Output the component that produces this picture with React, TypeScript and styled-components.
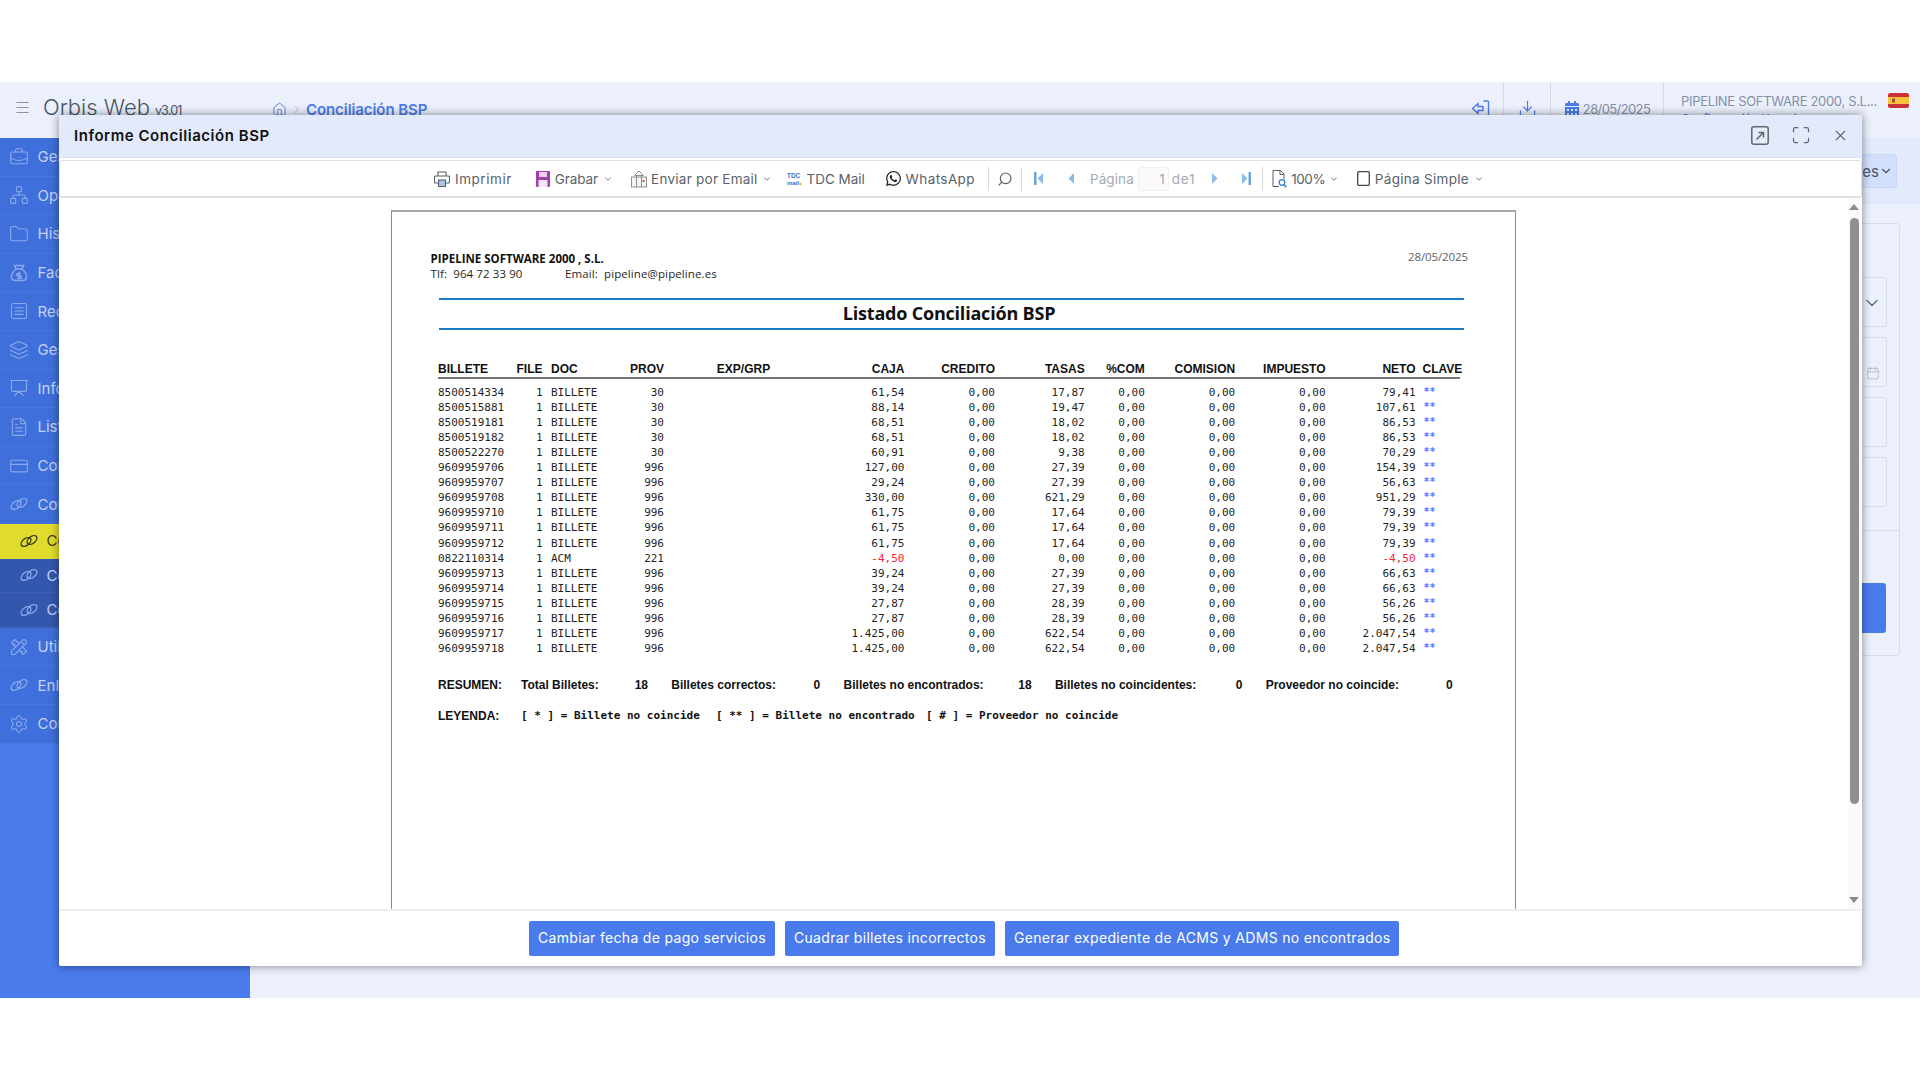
import React from 'react';
import styled, { createGlobalStyle } from 'styled-components';
import { BriefcaseBusiness, Network, Folder, SquareMenu, Layers, Presentation, FileText, CreditCard, Settings, Home, ChevronRight, ChevronDown, Search, Download, Calendar, Menu, X, Maximize } from 'lucide-react';
import { FaWhatsapp, FaCalendarAlt } from 'react-icons/fa';
import { TbTools } from 'react-icons/tb';

const UI = '"Inter", "Noto Sans", sans-serif';
const MONO = '"DejaVu Sans Mono", "Liberation Mono", monospace';
const ARIAL = '"Liberation Sans", Arial, sans-serif';
const DOC = '"Open Sans", "Noto Sans", sans-serif';

const Global = createGlobalStyle`
  html, body { margin: 0; padding: 0; background: #fff; }
  body { width: 1920px; height: 1080px; overflow: hidden; font-family: ${UI}; }
  * { box-sizing: border-box; }
`;

const Shell = styled.div`
  position: relative;
  margin-top: 82px;
  height: 916px;
  background: #ebf0fc;
  display: flex;
  flex-direction: column;
`;
const TopBar = styled.header`
  height: 56px;
  display: flex;
  align-items: flex-start;
  padding: 0 11px 0 14px;
  color: #6d7a90;
`;
const Burger = styled.span`
  display: flex;
  margin-top: 17px;
  color: #8a93a3;
`;
const Brand = styled.div`
  margin: 12px 0 0 12px;
  font-size: 22px;
  font-weight: 300;
  color: #4a5568;
  letter-spacing: 0;
  white-space: nowrap;
  width: 229px;
  small { font-size: 12.5px; margin-left: 5px; font-weight: 400; letter-spacing: -0.8px; }
`;
const Crumbs = styled.div`
  display: flex;
  align-items: center;
  gap: 3px;
  margin-top: 18px;
  color: #4a7bed;
  font-size: 15px;
  font-weight: 600;
  letter-spacing: -0.08px;
  white-space: nowrap;
  flex: 1;
  svg:nth-child(2) { color: #aab4c8; margin-right: 0; }
`;
const HeadTool = styled.div<{ $w: number }>`
  width: ${p => p.$w}px;
  height: 38px;
  padding-top: 17px;
  display: flex;
  justify-content: center;
  border-right: 1px solid #d4dbe8;
  gap: 3px;
  font-size: 13px;
  color: #4a7bed;
  span { color: #8490a5; letter-spacing: -0.6px; line-height: 20px; }
`;
const Company = styled.div`
  margin: 11px 0 0 17px;
  width: 207px;
  font-size: 13px;
  line-height: 17px;
  color: #8490a5;
  white-space: nowrap;
  letter-spacing: -0.32px;
  b { display: block; color: #4a7bed; font-weight: 500; font-size: 12px; }
`;
const Flag = styled.svg`
  margin-top: 11px;
  flex: none;
`;
const Below = styled.div`
  flex: 1;
  display: flex;
  min-height: 0;
`;
const Sidebar = styled.nav`
  width: 250px;
  flex: none;
  background: #4a7bed;
  display: flex;
  flex-direction: column;
`;
const NavRow = styled.div<{ $kind?: 'active' | 'sub' }>`
  display: flex;
  align-items: center;
  gap: ${p => (p.$kind ? '7.5px' : '9px')};
  height: ${p => (p.$kind ? '34.6px' : '38.6px')};
  padding-left: ${p => (p.$kind ? '19px' : '8.5px')};
  background: ${p => (p.$kind === 'active' ? '#e0dc2e' : p.$kind === 'sub' ? '#3357ad' : '#3f6fdb')};
  color: ${p => (p.$kind === 'active' ? '#3f3f20' : '#c3d1f6')};
  border-bottom: 1px solid rgba(255, 255, 255, 0.05);
  font-size: 15px;
  white-space: nowrap;
  svg { color: ${p => (p.$kind === 'active' ? '#3a3a1a' : '#8ba8ec')}; flex: none; }
`;
const Main = styled.main`
  flex: 1;
  display: flex;
  flex-direction: column;
`;
const FilterBar = styled.div`
  height: 66px;
  background: #e3eafb;
  border-bottom: 1px solid #dbe4f8;
  display: flex;
  justify-content: flex-end;
  padding: 16px 23px 0 0;
`;
const OptionsButton = styled.div`
  height: 34px;
  display: flex;
  align-items: center;
  gap: 0;
  padding: 0 3px 0 12px;
  background: #d3e0fb;
  border: 1px solid #c6d6f8;
  border-radius: 3px;
  color: #4b5568;
  font-size: 15px;
`;
const FormPanel = styled.section`
  width: 400px;
  height: 433px;
  margin: 19px 20px 0 auto;
  border: 1px solid #d6dcea;
  border-radius: 3px;
  padding: 53px 12px 0;
  display: flex;
  flex-direction: column;
  gap: 10px;
`;
const Field = styled.div`
  height: 50px;
  flex: none;
  border: 1px solid #d6dcea;
  border-radius: 3px;
  display: flex;
  align-items: center;
  justify-content: flex-end;
  padding: 2px 4px 0 0;
  color: #5b6b85;
`;
const PanelFoot = styled.div`
  margin: 13px -12px 0;
  border-top: 1px solid #d6dcea;
  padding: 52px 13px 0;
`;
const PanelButton = styled.div`
  height: 50px;
  background: #4a7bed;
  border-radius: 3px;
`;

const Modal = styled.div`
  position: absolute;
  left: 59px;
  top: 33px;
  width: 1803px;
  height: 851px;
  background: #fff;
  box-shadow: 0 0 10px rgba(0, 0, 0, 0.45);
  border-radius: 2px;
  display: flex;
  flex-direction: column;
`;
const ModalHead = styled.div`
  height: 43px;
  flex: none;
  background: #e3eafb;
  border-bottom: 1px solid #d6e0f8;
  display: flex;
  align-items: center;
  padding: 0 13px 2px 15px;
  color: #666;
`;
const ModalTitle = styled.h1`
  margin: 0;
  flex: 1;
  font-size: 15px;
  font-weight: 600;
  color: #111;
  letter-spacing: 0.54px;
`;
const HeadIcons = styled.div`
  display: flex;
  align-items: center;
  gap: 22px;
  svg:last-child { margin-left: -1px; }
`;
const Toolbar = styled.div`
  height: 38px;
  flex: none;
  margin-top: 2px;
  border: 1px solid #e0e0e0;
  border-bottom-width: 2px;
  border-radius: 3px;
  display: flex;
  align-items: center;
  padding-left: 374px;
  font-size: 13.5px;
  color: #5a5f69;
  svg.chev { stroke-width: 2; color: #5a5f69; }
`;
const ToolItem = styled.div<{ $ml?: number; $muted?: boolean; $ls?: number; $gap?: number }>`
  display: flex;
  align-items: center;
  gap: ${p => p.$gap ?? 4}px;
  margin-left: ${p => p.$ml ?? 0}px;
  white-space: nowrap;
  color: ${p => (p.$muted ? '#a4a9b2' : 'inherit')};
  letter-spacing: ${p => p.$ls ?? 0.1}px;
`;
const ToolSep = styled.span<{ $ml: number }>`
  width: 1px;
  height: 24px;
  background: #d9d9d9;
  margin-left: ${p => p.$ml}px;
`;
const PageBox = styled.span`
  width: 31px;
  height: 24px;
  margin-left: 4px;
  background: #fafafa;
  border: 1px solid #f0f0f0;
  border-radius: 3px;
  display: flex;
  align-items: center;
  justify-content: flex-end;
  padding-right: 3px;
  color: #a4a9b2;
`;
const ModalBody = styled.div`
  position: relative;
  flex: 1;
  min-height: 0;
  overflow: hidden;
  padding: 12px 0 0 332px;
`;
const Scrollbar = styled.div`
  position: absolute;
  right: 2px;
  top: 0;
  bottom: 0;
  width: 12px;
  background: #fafafa;
  display: flex;
  flex-direction: column;
  align-items: center;
`;
const ArrowUp = styled.span`
  margin-top: 6px;
  width: 0;
  height: 0;
  border: 5px solid transparent;
  border-top: 0;
  border-bottom: 6px solid #8c8c8c;
`;
const Thumb = styled.span`
  margin-top: 8px;
  width: 9px;
  height: 586px;
  background: #8f8f8f;
  border-radius: 5px;
`;
const ArrowDown = styled.span`
  margin-top: auto;
  margin-bottom: 6px;
  width: 0;
  height: 0;
  border: 5px solid transparent;
  border-bottom: 0;
  border-top: 6px solid #8c8c8c;
`;
const Sheet = styled.article`
  width: 1125px;
  height: 760px;
  border: 1px solid #8a8a8a;
  border-top: 2px solid #a8a8a8;
  border-bottom: 0;
  background: #fff;
  padding-top: 39px;
  color: #1f1f1f;
`;
const SheetTop = styled.div`
  display: flex;
  justify-content: space-between;
  padding: 0 47px 0 38.5px;
  font-family: ${DOC};
  font-size: 11.5px;
  line-height: 15px;
  height: 30px;
  white-space: pre;
`;
const Firm = styled.div`
  font-weight: 700;
  color: #111;
`;
const Contact = styled.div`
  display: flex;
  letter-spacing: 0.1px;
  margin-top: -0.5px;
  span:first-child { width: 134.5px; }
`;
const DocDate = styled.div`
  color: #5f5f5f;
  letter-spacing: -0.1px;
  margin-top: -2px;
`;
const TitleBox = styled.div`
  margin: 17px 0 0 47px;
  width: 1025px;
  height: 32px;
  border-top: 2px solid #1b7cc4;
  border-bottom: 2px solid #1b7cc4;
  padding: 0 5px 2px 0;
  display: flex;
  align-items: center;
  justify-content: center;
  font-family: ${DOC};
  font-size: 18px;
  font-weight: 700;
  color: #111;
  letter-spacing: -0.2px;
`;
const cols = '67px 37.5px 78.5px 43px 52.8px 83.6px 104px 90.6px 89.7px 60.2px 90.3px 90.4px 90px 47px';
const TableHead = styled.div`
  display: grid;
  grid-template-columns: ${cols};
  margin: 31px 0 0 46px;
  width: 1022px;
  height: 18px;
  border-bottom: 2px solid #777;
  font-family: ${ARIAL};
  font-weight: 700;
  font-size: 12px;
  line-height: 16px;
  color: #111;
  white-space: nowrap;
`;
const DataRows = styled.div`
  margin: 5.5px 0 0 46px;
`;
const DataRow = styled.div`
  display: grid;
  grid-template-columns: ${cols};
  height: 15.12px;
  line-height: 15px;
  font-family: ${MONO};
  font-size: 11px;
  white-space: pre;
`;
const Cell = styled.span<{ $right?: boolean; $inset?: number; $red?: boolean }>`
  text-align: ${p => (p.$right ? 'right' : 'left')};
  padding-left: ${p => p.$inset ?? 0}px;
  color: ${p => (p.$red ? '#f5233a' : 'inherit')};
`;
const Key = styled.span`
  padding: 1px 0 0 8px;
  color: #4d7cfe;
  font-size: 10px;
  line-height: 12px;
  font-weight: 700;
`;
const SummaryRow = styled.div`
  display: grid;
  grid-template-columns: 59.7px 127px 149px 188px 187.5px 187px;
  column-gap: 23.3px;
  margin: 20.5px 0 0 46px;
  font-family: ${ARIAL};
  font-weight: 700;
  font-size: 12px;
  line-height: 16px;
  color: #111;
  white-space: nowrap;
`;
const Pair = styled.span`
  display: flex;
  justify-content: space-between;
`;
const LegendRow = styled.div`
  display: grid;
  grid-template-columns: 83px 195px 210px auto;
  margin: 15px 0 0 46px;
  line-height: 16px;
  font-family: ${MONO};
  font-size: 11px;
  font-weight: 700;
  color: #111;
  white-space: pre;
  b { font-family: ${ARIAL}; font-size: 12px; }
`;
const ModalFoot = styled.div`
  height: 57px;
  flex: none;
  border-top: 2px solid #eee;
  padding: 10px 0 0 470px;
  display: flex;
  gap: 10px;
`;
const ActionButton = styled.button`
  height: 35px;
  padding: 0 9px 2px;
  border: 0;
  border-radius: 2px;
  background: #4a7bed;
  color: #fff;
  font-family: ${UI};
  font-size: 14px;
  font-weight: 400;
  letter-spacing: 0.32px;
  white-space: nowrap;
`;

const LinkIcon = ({ size = 20 }: { size?: number }) => (
  <svg width={size} height={size} viewBox="0 0 20 20" fill="none" stroke="currentColor" strokeWidth="1.4">
    <ellipse cx="7" cy="11" rx="5.6" ry="3.4" transform="rotate(-38 7 11)" />
    <ellipse cx="13" cy="9" rx="5.6" ry="3.4" transform="rotate(-38 13 9)" />
  </svg>
);
const BagIcon = () => (
  <svg width="20" height="20" viewBox="0 0 20 20" fill="none" stroke="currentColor" strokeWidth="1.4">
    <path d="M7 6 5.5 2.5h9L13 6M7 6h6M7 6C3 9 2.5 12 2.5 14c0 2.5 2 3.5 4 3.5h7c2 0 4-1 4-3.5 0-2-.5-5-4.500-8" />
    <path d="M10 9v6M12 10.500H9a1.200 1.200 0 0 0 0 2.500h2a1.200 1.200 0 0 1 0 2.500H8" />
  </svg>
);
const LoginArrow = () => (
  <svg width="19" height="19" viewBox="0 0 19 19" fill="none" stroke="currentColor" strokeWidth="1.4">
    <path d="M1.500 9.500 7 4.500v3h5v4H7v3z" />
    <path d="M12.500 2h4a1 1 0 0 1 1 1v13a1 1 0 0 1-1 1h-4" />
  </svg>
);
const OpenExternal = () => (
  <svg width="18" height="19" viewBox="0 0 18 19" fill="none" stroke="currentColor" strokeWidth="1.5">
    <rect x=".8" y=".8" width="16.400" height="17.400" rx="2" />
    <path d="M5.500 13.500 12 7M7.500 6.500H12.500V11.500" />
  </svg>
);
const PrinterIcon = () => (
  <svg width="16" height="16" viewBox="0 0 16 16" fill="none" stroke="#5a5f69" strokeWidth="1.1">
    <path d="M4 5V1h8v4" />
    <path d="M4 12H1.500a1 1 0 0 1-1-1V6a1 1 0 0 1 1-1h13a1 1 0 0 1 1 1v5a1 1 0 0 1-1 1H12" />
    <rect x="4.500" y="9" width="7" height="6.500" fill="#a9c6ea" />
  </svg>
);
const PageIcon = () => (
  <svg width="15" height="18" viewBox="0 0 15 18" fill="none" stroke="#5a5f69" strokeWidth="1">
    <path d="M1 .5h7.500L12 4v5M8 .5V4.500H12M1 .5V16.500H7" />
    <circle cx="10" cy="12.500" r="2.800" stroke="#2f7fd6" strokeWidth="1.3" />
    <path d="m12 14.700 2.200 2.500" stroke="#2f7fd6" strokeWidth="1.5" />
  </svg>
);
const SinglePage = () => (
  <svg width="13" height="15" viewBox="0 0 13 15" fill="none" stroke="#444" strokeWidth="1.3">
    <rect x=".7" y=".7" width="11.600" height="13.600" rx="1" />
  </svg>
);
const SaveIcon = () => (
  <svg width="14" height="16" viewBox="0 0 14 16">
    <rect width="14" height="16" rx="1" fill="#a43db0" />
    <rect x="3" y="1" width="8" height="5" fill="#e9d3ee" />
    <rect x="2.500" y="9" width="9" height="7" fill="#f3e6f5" />
  </svg>
);
const MailPkgIcon = () => (
  <svg width="16" height="18" viewBox="0 0 16 18" fill="none" stroke="#8b8f96" strokeWidth="1">
    <path d="M8 1 3.500 5.500h9z" />
    <rect x=".5" y="7" width="15" height="10" fill="#f3f4f6" />
    <path d="M5.500 5.500V17M10.500 5.500V17" />
    <rect x="11.500" y="10" width="2" height="2" fill="#d8533f" stroke="none" />
  </svg>
);
const TdcIcon = () => (
  <svg width="15" height="14" viewBox="0 0 15 14" fill="#3a6fd8" fontFamily={ARIAL} fontWeight="700">
    <text x="0" y="6" fontSize="6.500">TDC</text>
    <text x="0" y="13" fontSize="6">mail</text>
    <rect x="12.500" y="11" width="2" height="2" fill="#e5a530" />
  </svg>
);
const TriLeft = ({ bar }: { bar?: boolean }) => (
  <svg width={bar ? 9 : 6} height="13" viewBox={bar ? '0 0 9 13' : '3 0 6 13'} fill="#8cbbe6">
    {bar && <rect x="0" y="0" width="2.500" height="13" fill="#6aa5dc" />}
    <path d="M9 1v11L3.500 6.500z" />
  </svg>
);
const TriRight = ({ bar }: { bar?: boolean }) => (
  <svg width={bar ? 9 : 6} height="13" viewBox={bar ? '0 0 9 13' : '0 0 6 13'} fill="#8cbbe6">
    <path d="M0 1v11l5.500-5.500z" />
    {bar && <rect x="6.500" y="0" width="2.500" height="13" fill="#6aa5dc" />}
  </svg>
);

const Spain = () => (
  <Flag width="21" height="15" viewBox="0 0 21 15">
    <rect width="21" height="15" rx="2" fill="#c8303a" />
    <rect y="4" width="21" height="7" fill="#f6c33b" />
    <rect x="4" y="5.500" width="3" height="4" fill="#a8503a" />
  </Flag>
);

const Chev = () => <ChevronDown className="chev" size={10} />;

type Nav = { icon: React.ReactNode; label: string; kind?: 'active' | 'sub' };
const navItems: Nav[] = [
  { icon: <BriefcaseBusiness size={20} strokeWidth={1.3} />, label: 'Gestión de reservas' },
  { icon: <Network size={20} strokeWidth={1.3} />, label: 'Operaciones' },
  { icon: <Folder size={20} strokeWidth={1.3} />, label: 'Histórico' },
  { icon: <BagIcon />, label: 'Facturación' },
  { icon: <SquareMenu size={20} strokeWidth={1.3} />, label: 'Recibos' },
  { icon: <Layers size={20} strokeWidth={1.3} />, label: 'Gestión de cobros' },
  { icon: <Presentation size={20} strokeWidth={1.3} />, label: 'Informes' },
  { icon: <FileText size={20} strokeWidth={1.3} />, label: 'Listados' },
  { icon: <CreditCard size={20} strokeWidth={1.3} />, label: 'Contabilidad' },
  { icon: <LinkIcon />, label: 'Conciliaciones' },
  { icon: <LinkIcon />, label: 'Conciliación BSP', kind: 'active' },
  { icon: <LinkIcon />, label: 'Conciliación tarjetas', kind: 'sub' },
  { icon: <LinkIcon />, label: 'Conciliación bancos', kind: 'sub' },
  { icon: <TbTools size={20} strokeWidth={1.3} />, label: 'Utilidades' },
  { icon: <LinkIcon />, label: 'Enlaces' },
  { icon: <Settings size={20} strokeWidth={1.3} />, label: 'Configuración' },
];

type Row = [string, string, string, string, string, string];
const B = 'BILLETE';
const rows: Row[] = [
  ['8500514334', B, '30', '61,54', '17,87', '79,41'],
  ['8500515881', B, '30', '88,14', '19,47', '107,61'],
  ['8500519181', B, '30', '68,51', '18,02', '86,53'],
  ['8500519182', B, '30', '68,51', '18,02', '86,53'],
  ['8500522270', B, '30', '60,91', '9,38', '70,29'],
  ['9609959706', B, '996', '127,00', '27,39', '154,39'],
  ['9609959707', B, '996', '29,24', '27,39', '56,63'],
  ['9609959708', B, '996', '330,00', '621,29', '951,29'],
  ['9609959710', B, '996', '61,75', '17,64', '79,39'],
  ['9609959711', B, '996', '61,75', '17,64', '79,39'],
  ['9609959712', B, '996', '61,75', '17,64', '79,39'],
  ['0822110314', 'ACM', '221', '-4,50', '0,00', '-4,50'],
  ['9609959713', B, '996', '39,24', '27,39', '66,63'],
  ['9609959714', B, '996', '39,24', '27,39', '66,63'],
  ['9609959715', B, '996', '27,87', '28,39', '56,26'],
  ['9609959716', B, '996', '27,87', '28,39', '56,26'],
  ['9609959717', B, '996', '1.425,00', '622,54', '2.047,54'],
  ['9609959718', B, '996', '1.425,00', '622,54', '2.047,54'],
];

const App = () => (
  <>
    <Global />
    <Shell>
      <TopBar>
        <Burger><Menu size={17} strokeWidth={1.5} /></Burger>
        <Brand>Orbis Web<small>v3.01</small></Brand>
        <Crumbs>
          <Home size={15} strokeWidth={1.5} />
          <ChevronRight size={13} strokeWidth={1.5} />
          Conciliación BSP
        </Crumbs>
        <HeadTool $w={47}><LoginArrow /></HeadTool>
        <HeadTool $w={47}><Download size={19} strokeWidth={1.5} /></HeadTool>
        <HeadTool $w={113}><FaCalendarAlt size={16} style={{ marginTop: 2 }} /><span>28/05/2025</span></HeadTool>
        <Company>PIPELINE SOFTWARE 2000, S.L...<b>Configuración Usuario</b></Company>
        <Spain />
      </TopBar>
      <Below>
        <Sidebar>
          {navItems.map(n => (
            <NavRow key={n.label} $kind={n.kind}>{n.icon}{n.label}</NavRow>
          ))}
        </Sidebar>
        <Main>
          <FilterBar>
            <OptionsButton>Opciones<ChevronDown size={14} strokeWidth={2} /></OptionsButton>
          </FilterBar>
          <FormPanel>
            <Field><ChevronDown size={20} strokeWidth={1.6} /></Field>
            <Field><Calendar size={14} strokeWidth={1.2} color="#a7adbb" style={{ marginTop: 20, marginRight: 2 }} /></Field>
            <Field />
            <Field />
            <PanelFoot><PanelButton /></PanelFoot>
          </FormPanel>
        </Main>
      </Below>

      <Modal>
        <ModalHead>
          <ModalTitle>Informe Conciliación BSP</ModalTitle>
          <HeadIcons>
            <OpenExternal />
            <Maximize size={20} strokeWidth={1.5} />
            <X size={17} strokeWidth={1.6} />
          </HeadIcons>
        </ModalHead>
        <Toolbar>
          <ToolItem $ls={0.55} $gap={5}><PrinterIcon />Imprimir</ToolItem>
          <ToolItem $ml={24} $ls={-0.1} $gap={5}><SaveIcon />Grabar<Chev /></ToolItem>
          <ToolItem $ml={18} $ls={0.25}><MailPkgIcon />Enviar por Email<Chev /></ToolItem>
          <ToolItem $ml={15} $ls={-0.05} $gap={5}><TdcIcon />TDC Mail</ToolItem>
          <ToolItem $ml={20} $ls={0.4}><FaWhatsapp size={17} color="#222" />WhatsApp</ToolItem>
          <ToolSep $ml={13} />
          <ToolItem $ml={8}><Search size={16} strokeWidth={1.7} style={{ transform: 'scaleX(-1)' }} /></ToolItem>
          <ToolSep $ml={8} />
          <ToolItem $ml={12}><TriLeft bar /></ToolItem>
          <ToolItem $ml={25}><TriLeft /></ToolItem>
          <ToolItem $ml={16} $muted>Página</ToolItem>
          <PageBox>1</PageBox>
          <ToolItem $ml={3} $muted $ls={0.7}>de1</ToolItem>
          <ToolItem $ml={17}><TriRight /></ToolItem>
          <ToolItem $ml={24}><TriRight bar /></ToolItem>
          <ToolSep $ml={11} />
          <ToolItem $ml={9} $ls={-0.4}><PageIcon />100%<Chev /></ToolItem>
          <ToolItem $ml={17.5} $ls={0.3} $gap={5}><SinglePage />Página Simple<Chev /></ToolItem>
        </Toolbar>
        <ModalBody>
          <Sheet>
            <SheetTop>
              <div>
                <Firm>PIPELINE SOFTWARE 2000 , S.L.</Firm>
                <Contact><span>Tlf:  964 72 33 90</span><span>Email:  pipeline@pipeline.es</span></Contact>
              </div>
              <DocDate>28/05/2025</DocDate>
            </SheetTop>
            <TitleBox>Listado Conciliación BSP</TitleBox>
            <TableHead>
              <Cell>BILLETE</Cell>
              <Cell $right>FILE</Cell>
              <Cell $inset={8.5}>DOC</Cell>
              <Cell $right>PROV</Cell>
              <Cell />
              <Cell>EXP/GRP</Cell>
              <Cell $right>CAJA</Cell>
              <Cell $right>CREDITO</Cell>
              <Cell $right>TASAS</Cell>
              <Cell $right>%COM</Cell>
              <Cell $right>COMISION</Cell>
              <Cell $right>IMPUESTO</Cell>
              <Cell $right>NETO</Cell>
              <Cell $inset={7}>CLAVE</Cell>
            </TableHead>
            <DataRows>
              {rows.map(([num, doc, prov, caja, tasas, neto]) => (
                <DataRow key={num}>
                  <Cell>{num}</Cell>
                  <Cell $right>1</Cell>
                  <Cell $inset={8.5}>{doc}</Cell>
                  <Cell $right>{prov}</Cell>
                  <Cell />
                  <Cell />
                  <Cell $right $red={caja.startsWith('-')}>{caja}</Cell>
                  <Cell $right>0,00</Cell>
                  <Cell $right>{tasas}</Cell>
                  <Cell $right>0,00</Cell>
                  <Cell $right>0,00</Cell>
                  <Cell $right>0,00</Cell>
                  <Cell $right $red={neto.startsWith('-')}>{neto}</Cell>
                  <Key>**</Key>
                </DataRow>
              ))}
            </DataRows>
            <SummaryRow>
              <span>RESUMEN:</span>
              <Pair><span>Total Billetes:</span><span>18</span></Pair>
              <Pair><span>Billetes correctos:</span><span>0</span></Pair>
              <Pair><span>Billetes no encontrados:</span><span>18</span></Pair>
              <Pair><span>Billetes no coincidentes:</span><span>0</span></Pair>
              <Pair><span>Proveedor no coincide:</span><span>0</span></Pair>
            </SummaryRow>
            <LegendRow>
              <b>LEYENDA:</b>
              <span>[ * ] = Billete no coincide</span>
              <span>[ ** ] = Billete no encontrado</span>
              <span>[ # ] = Proveedor no coincide</span>
            </LegendRow>
          </Sheet>
          <Scrollbar><ArrowUp /><Thumb /><ArrowDown /></Scrollbar>
        </ModalBody>
        <ModalFoot>
          <ActionButton>Cambiar fecha de pago servicios</ActionButton>
          <ActionButton>Cuadrar billetes incorrectos</ActionButton>
          <ActionButton>Generar expediente de ACMS y ADMS no encontrados</ActionButton>
        </ModalFoot>
      </Modal>
    </Shell>
  </>
);

export default App;
